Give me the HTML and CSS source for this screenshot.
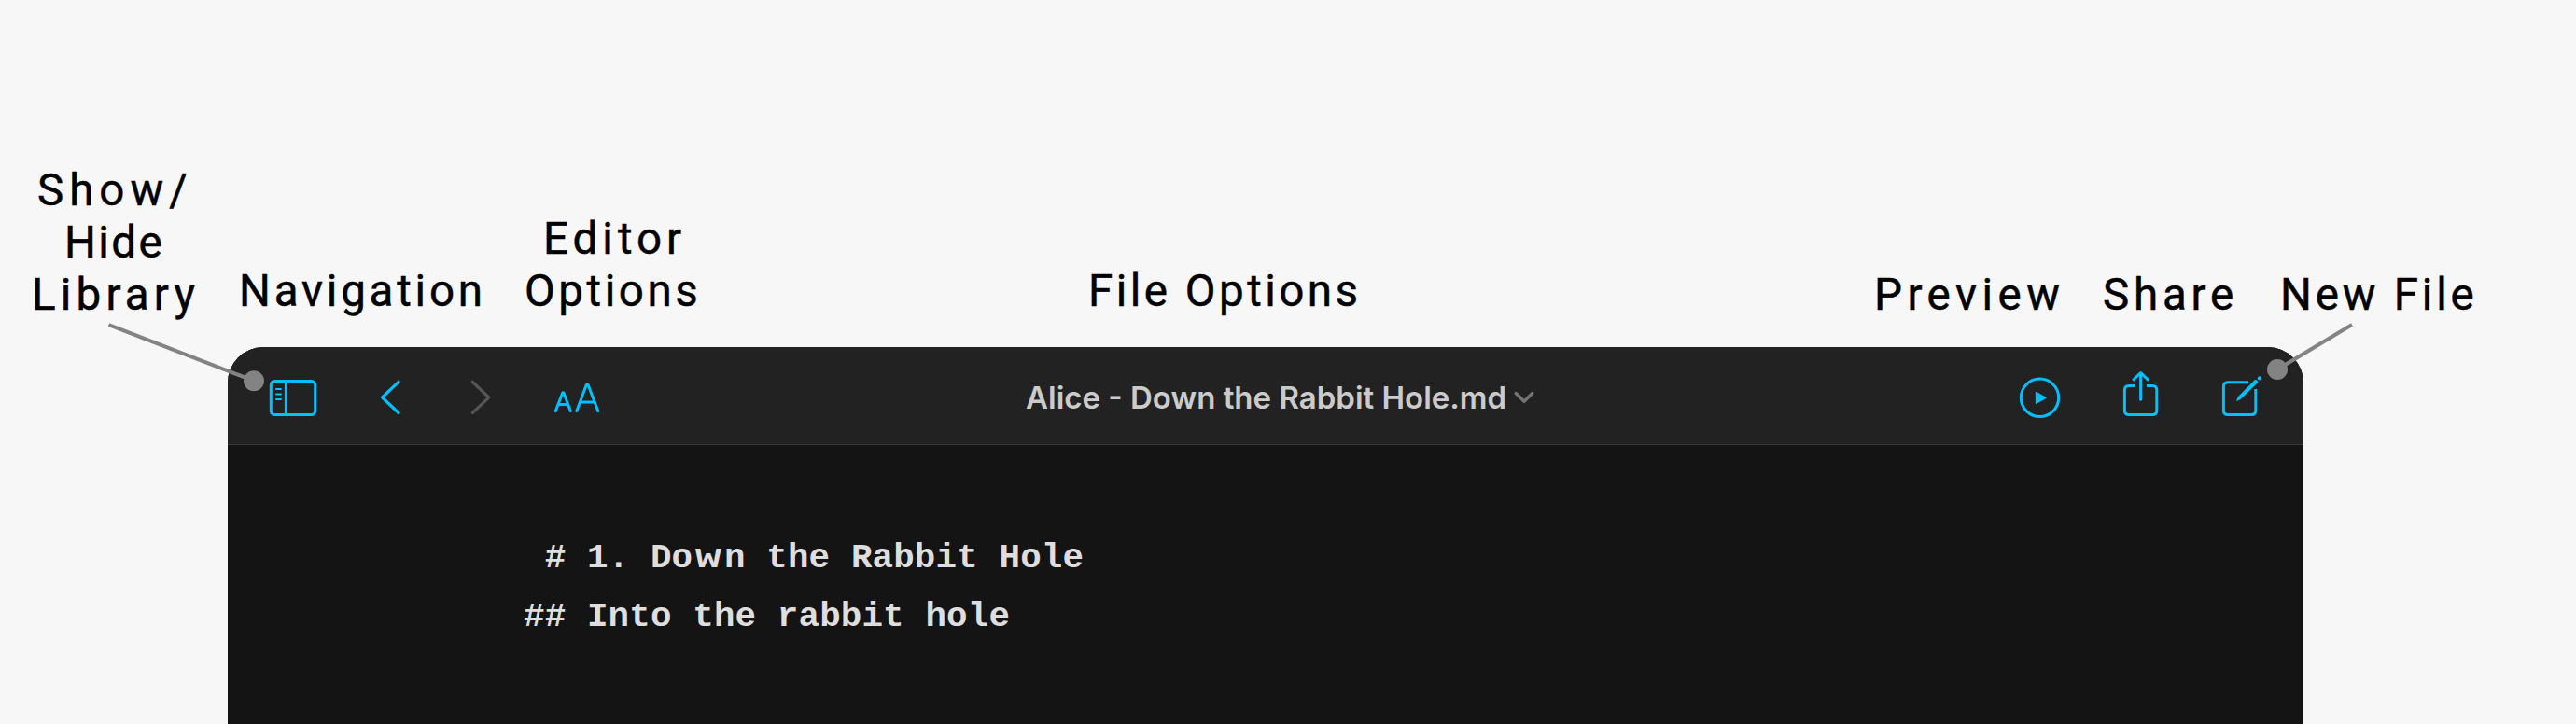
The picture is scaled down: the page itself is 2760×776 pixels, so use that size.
FILE: index.html
```
<!DOCTYPE html>
<html lang="en">
<head>
    <meta charset="UTF-8">
    <meta name="viewport" content="width=device-width, initial-scale=1.0">
    <title>Toolbar Overview</title>
    <link rel="stylesheet" href="styles.css">
</head>
<body>
    <!-- Labels above the window -->
    <div class="labels">
        <div class="label label-library low"><span class="show">Show/</span><br><span class="hide">Hide</span><br>Library</div>
        <div class="label label-navigation">Navigation</div>
        <div class="label label-editor"><span class="editor">Editor</span><br>Options</div>
        <div class="label label-file">File Options</div>
        <div class="label label-preview low">Preview</div>
        <div class="label label-share low">Share</div>
        <div class="label label-new low">New File</div>
    </div>

    <div class="window">
        <div class="toolbar">
            <div class="group group-left">
                <svg class="icon" viewBox="284 394 60 60">
                    <rect x="290.3" y="408.4" width="47.4" height="36.2" rx="4"/>
                    <path d="M306.4 408.5V444.5"/>
                    <path class="thin" d="M296 416.9h5M296 422.5h5M296 428h5"/>
                </svg>
                <svg class="icon" viewBox="380 394 60 60">
                    <path class="arrow" d="M427 409.3L409.5 426L427 442.5"/>
                </svg>
                <svg class="icon disabled" viewBox="476 394 60 60">
                    <path class="arrow" d="M506.3 409.3L523.8 426L506.3 442.5"/>
                </svg>
                <svg class="icon icon-text" viewBox="572 394 80 60">
                    <path d="M595.3 440.6L602.6 421.3Q603.3 420 604 421.3L611.3 440.6M597.8 433.6H608.8"/>
                    <path d="M617.8 440.6L628.3 412.5Q629.2 410.8 630.1 412.5L640.8 440.6M621.4 431H637.2"/>
                </svg>
            </div>

            <div class="file-title">
                <span class="file-name">Alice - Down the Rabbit Hole.md</span>
                <svg class="chevron" viewBox="0 0 24 16">
                    <path d="M3.2 3.5L12 12.3L20.8 3.5"/>
                </svg>
            </div>

            <div class="group group-right">
                <svg class="icon" viewBox="2156 394 60 60">
                    <circle cx="2185.5" cy="426.3" r="20.2"/>
                    <path class="solid" d="M2181.6 420.6V432.2L2192 426.4Z"/>
                </svg>
                <svg class="icon" viewBox="2264 394 60 60">
                    <path class="butt" d="M2287.3 413.4H2281Q2276.4 413.4 2276.4 418V440Q2276.4 444.5 2281 444.5H2306.2Q2310.8 444.5 2310.8 440V418Q2310.8 413.4 2306.2 413.4H2300"/>
                    <path d="M2293.6 428.3V400M2286 406.8L2293.6 399.5L2301.3 406.8"/>
                </svg>
                <svg class="icon" viewBox="2372 394 60 60">
                    <path class="butt" d="M2409 409.7H2387Q2382.4 409.7 2382.4 414.3V440Q2382.4 444.5 2387 444.5H2412Q2416.8 444.5 2416.8 440V417"/>
                    <path class="solid-fill" d="M2396 430L2397.6 425.5L2415.7 407.3Q2417.1 406.3 2418.5 407.7Q2419.8 409.1 2418.7 410.5L2400.3 428.2Z"/>
                    <circle class="solid-fill" cx="2420.8" cy="405.4" r="2.1"/>
                </svg>
            </div>
        </div>

        <div class="editor-text">
            <p>&nbsp;# 1. Do<span class="wide">w</span>n the Rabbit Hole</p>
            <p>## Into the rabbit hole</p>
        </div>
    </div>

    <!-- Leader lines -->
    <svg class="leader leader-left" viewBox="110 340 180 84">
        <path d="M116.5 348.2L272 408.2"/>
        <circle cx="272" cy="408.2" r="11"/>
    </svg>
    <svg class="leader leader-right" viewBox="2420 340 110 84">
        <path d="M2520 348L2440 396"/>
        <circle cx="2440" cy="396" r="11"/>
    </svg>
</body>
</html>
```
FILE: styles.css
```
*, *::before, *::after {
    box-sizing: border-box;
    margin: 0;
    padding: 0;
}

body {
    position: relative;
    width: 2760px;
    height: 776px;
    background-color: #f7f7f7;
    overflow: hidden;
}

/* Labels */
.labels {
    display: flex;
    align-items: flex-end;
    height: 372px;
    padding-bottom: 32px;
}

.label {
    flex: none;
    font-family: Roboto, "Liberation Sans", sans-serif;
    font-size: 47.5px;
    line-height: 56px;
    color: #000;
    white-space: nowrap;
    -webkit-text-stroke: 0.5px #000;
}

.low {
    margin-bottom: -4px;
}

.label-library {
    width: 190px;
    margin-left: 34px;
    letter-spacing: 5.2px;
}

.show {
    margin-left: 6px;
    letter-spacing: 6px;
}

.hide {
    margin-left: 35px;
    letter-spacing: 2.4px;
}

.label-navigation {
    width: 270px;
    margin-left: 32px;
    letter-spacing: 3.8px;
}

.label-editor {
    width: 200px;
    margin-left: 36px;
    letter-spacing: 3.6px;
}

.editor {
    margin-left: 20px;
    letter-spacing: 5px;
}

.label-file {
    width: 300px;
    margin-left: 404px;
    letter-spacing: 3.5px;
}

.label-preview {
    width: 210px;
    margin-left: 542px;
    letter-spacing: 5.5px;
}

.label-share {
    width: 150px;
    margin-left: 35px;
    letter-spacing: 4.8px;
}

.label-new {
    margin-left: 40px;
    letter-spacing: 3.8px;
}

/* Window */
.window {
    width: 2224px;
    height: 404px;
    margin-left: 244px;
    background-color: #141414;
    border-radius: 38px 38px 0 0;
    overflow: hidden;
}

.toolbar {
    display: flex;
    align-items: center;
    height: 105px;
    padding: 0 36px 0 40px;
    background-color: #222;
    border-bottom: 1px solid #3a3a3a;
}

.group {
    display: flex;
    flex: none;
}

.group-left {
    gap: 36px;
}

.group-right {
    gap: 48px;
    margin-left: auto;
}

.icon {
    width: 60px;
    height: 60px;
    fill: none;
    stroke: #00bfff;
    stroke-width: 3;
    stroke-linecap: round;
    stroke-linejoin: round;
}

.icon-text {
    width: 80px;
}

.disabled {
    stroke: #555;
}

.icon .thin {
    stroke-width: 2;
}

.icon .arrow {
    stroke-width: 3.2;
}

.icon .butt {
    stroke-linecap: butt;
}

.icon .solid {
    fill: #00bfff;
    stroke-width: 1.5;
}

.icon .solid-fill {
    fill: #00bfff;
    stroke: none;
}

.file-title {
    display: flex;
    align-items: center;
    margin-left: 447px;
    padding-top: 4px;
}

.file-name {
    width: 522px;
    font-family: Inter, sans-serif;
    font-size: 33px;
    font-weight: 600;
    line-height: 40px;
    color: #cbcbcb;
    white-space: nowrap;
}

.chevron {
    width: 24px;
    height: 16px;
    fill: none;
    stroke: #737373;
    stroke-width: 3.4;
    stroke-linecap: round;
    stroke-linejoin: round;
}

.editor-text {
    padding: 90px 0 0 317px;
    font-family: "Liberation Mono", monospace;
    font-size: 37.5px;
    font-weight: 700;
    line-height: 63px;
    letter-spacing: 0.15px;
    color: #dedede;
    white-space: nowrap;
}

.wide {
    display: inline-block;
    width: 1.5ch;
    text-align: center;
    transform: scaleX(1.25);
}

.leader {
    position: absolute;
    top: 340px;
    height: 84px;
    fill: #838383;
    stroke: none;
}

.leader path {
    stroke: #838383;
    stroke-width: 4;
}

.leader-left {
    left: 110px;
    width: 180px;
}

.leader-right {
    left: 2420px;
    width: 110px;
}
```
